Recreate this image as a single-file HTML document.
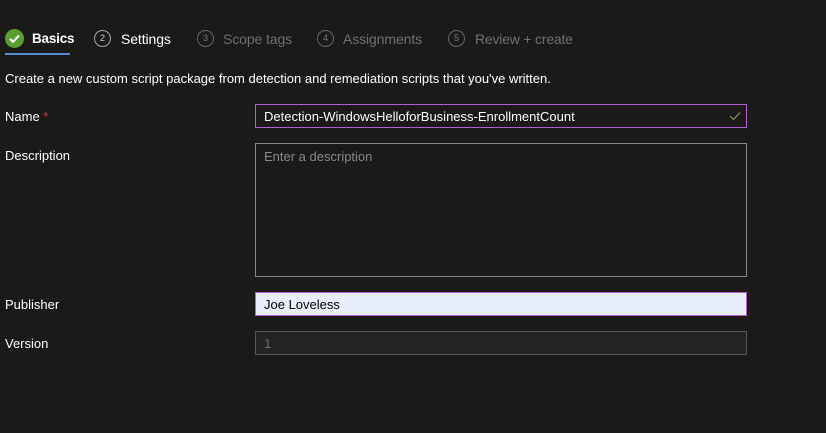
<!DOCTYPE html><html><head><style>
body{margin:0;width:826px;height:433px;background:#1b1a19;font-family:"Liberation Sans",sans-serif;font-size:13px;color:#fff;position:relative;overflow:hidden}
.a{position:absolute;white-space:nowrap}
.c{position:absolute;width:15px;height:15px;border:1px solid #aaa;border-radius:50%;font-size:9px;text-align:center;line-height:15px;color:#ccc}
.d{border-color:#666;color:#777}
.g{color:#6f6f6f;font-size:14px}
.box{position:absolute;left:255px;width:492px;box-sizing:border-box}
</style></head><body>
<svg class="a" style="left:5px;top:29px" width="19" height="19"><circle cx="9.5" cy="9.5" r="9.5" fill="#5a9e2f"/><path d="M5 9.8l3 3 6-6.3" stroke="#fff" stroke-width="2" fill="none"/></svg>
<div class="a" style="left:32px;top:31px;font-weight:bold;font-size:13.5px;letter-spacing:-0.2px">Basics</div>
<div class="a" style="left:5px;top:53px;width:65px;height:2px;background:#4f8fd6"></div>
<div class="c" style="left:94px;top:30px">2</div>
<div class="a" style="left:121px;top:31px;font-size:14px;letter-spacing:-0.1px">Settings</div>
<div class="c d" style="left:197px;top:30px">3</div>
<div class="a g" style="left:223px;top:31px;letter-spacing:-0.1px">Scope tags</div>
<div class="c d" style="left:317px;top:30px">4</div>
<div class="a g" style="left:343px;top:31px;letter-spacing:-0.1px">Assignments</div>
<div class="c d" style="left:448px;top:30px">5</div>
<div class="a g" style="left:475px;top:31px;letter-spacing:-0.2px">Review + create</div>
<div class="a" style="left:5px;top:71px">Create a new custom script package from detection and remediation scripts that you've written.</div>
<div class="a" style="left:5px;top:109px">Name <span style="color:#d13438">*</span></div>
<div class="box" style="top:104px;height:24px;border:1px solid #b05ed9;padding:4px 8px">Detection-WindowsHelloforBusiness-EnrollmentCount<svg style="position:absolute;right:5px;top:6px" width="12" height="10"><path d="M1 5l3.5 3.5L11 1.5" stroke="#7a9f58" stroke-width="1.2" fill="none"/></svg></div>
<div class="a" style="left:5px;top:148px">Description</div>
<div class="box" style="top:143px;height:134px;border:1px solid #8a8886;padding:5px 8px;color:#8a8886">Enter a description</div>
<div class="a" style="left:5px;top:297px">Publisher</div>
<div class="box" style="top:292px;height:24px;border:1px solid #b05ed9;background:#e8eefc;color:#000;padding:4px 8px">Joe Loveless</div>
<div class="a" style="left:5px;top:336px">Version</div>
<div class="box" style="top:331px;height:24px;border:1px solid #5a5958;background:#252423;color:#6f6e6d;padding:4px 8px">1</div>
</body></html>
